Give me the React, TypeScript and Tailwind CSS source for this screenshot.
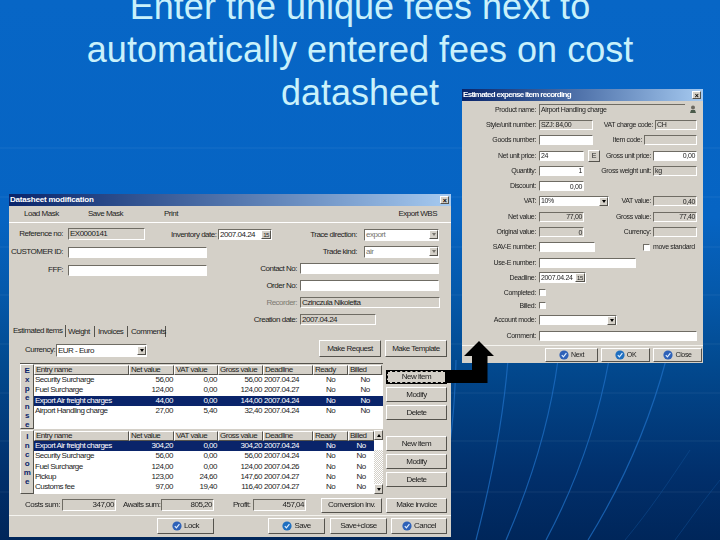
import type { ReactNode } from "react";

const sunken = "border border-t-[#6f6c64] border-l-[#6f6c64] border-b-white border-r-white";
const raised = "border border-t-white border-l-white border-b-[#55534d] border-r-[#55534d]";

function Label({ w, pr = 3, children, dim }: { w: number; pr?: number; children?: ReactNode; dim?: boolean }) {
  return (
    <span style={{ width: w, paddingRight: pr }} className={`shrink-0 text-right whitespace-nowrap ${dim ? "text-[#7d7a72]" : ""}`}>
      {children}
    </span>
  );
}

function Field({ w, h = 11, gray, right, children }: { w: number; h?: number; gray?: boolean; right?: boolean; children?: ReactNode }) {
  return (
    <div
      style={{ width: w, height: h }}
      className={`flex shrink-0 items-center overflow-hidden px-px leading-none ${sunken} ${gray ? "bg-[#d4d0c8]" : "bg-white"} ${right ? "justify-end" : ""}`}
    >
      {children}
    </div>
  );
}

function Select({ w, h = 12, gray, children }: { w: number; h?: number; gray?: boolean; children?: ReactNode }) {
  return (
    <div style={{ width: w, height: h }} className={`flex shrink-0 items-center justify-between bg-white pl-px ${sunken}`}>
      <span className={gray ? "text-[#77746d]" : ""}>{children}</span>
      <span className={`flex h-[9px] w-[9px] items-center justify-center bg-[#d4d0c8] ${raised}`}>
        <span className={`h-0 w-0 border-x-[2px] border-t-[3px] border-x-transparent ${gray ? "border-t-[#77746d]" : "border-t-black"}`} />
      </span>
    </div>
  );
}

function DateField({ w }: { w: number }) {
  return (
    <div style={{ width: w, height: 11 }} className={`flex shrink-0 items-center justify-between bg-white pl-px ${sunken}`}>
      <span>2007.04.24</span>
      <span className={`flex h-[9px] w-[10px] items-center justify-center bg-[#d4d0c8] text-[6px] leading-none ${raised}`}>15</span>
    </div>
  );
}

function Btn({ w, h, focus, icon, children }: { w: number; h: number; focus?: boolean; icon?: string; children: ReactNode }) {
  return (
    <div
      style={{ width: w, height: h }}
      className={`flex shrink-0 items-center justify-center gap-[2px] bg-[#d4d0c8] ${focus ? "border border-black outline-1 -outline-offset-2 outline-dashed outline-black" : raised}`}
    >
      {icon ? (
        <svg width="10" height="10" viewBox="0 0 10 10">
          <circle cx="5" cy="5" r="4.6" fill={icon} />
          <path d="M2.8 5.2 4.4 6.8 7.4 3.2" stroke="#dfeeff" strokeWidth="1.2" fill="none" />
        </svg>
      ) : null}
      <span>{children}</span>
    </div>
  );
}

function Title({ text, compact }: { text: string; compact?: boolean }) {
  return (
    <div className="flex h-[12px] shrink-0 items-center justify-between bg-gradient-to-r from-[#0a246a] to-[#a6caf0] pl-px pr-[2px] font-bold text-white">
      <span className={compact ? "text-[8px] tracking-[-0.7px]" : "tracking-[-0.2px]"}>{text}</span>
      <span className={`flex h-[8px] w-[9px] items-center justify-center bg-[#d4d0c8] text-[7px] leading-none text-black ${raised}`}>×</span>
    </div>
  );
}

const headers = ["Entry name", "Net value", "VAT value", "Gross value", "Deadline", "Ready", "Billed"];
const colWidths = [95, 45, 44, 45, 50, 35, 34];

type Row = { cells: string[]; sel?: boolean };

const expense: Row[] = [
  { cells: ["Security Surcharge", "56,00", "0,00", "56,00", "2007.04.24", "No", "No"] },
  { cells: ["Fuel Surcharge", "124,00", "0,00", "124,00", "2007.04.27", "No", "No"] },
  { cells: ["Export Air freight charges", "44,00", "0,00", "144,00", "2007.04.24", "No", "No"], sel: true },
  { cells: ["Airport Handling charge", "27,00", "5,40", "32,40", "2007.04.24", "No", "No"] },
];

const income: Row[] = [
  { cells: ["Export Air freight charges", "304,20", "0,00", "304,20", "2007.04.24", "No", "No"], sel: true },
  { cells: ["Security Surcharge", "56,00", "0,00", "56,00", "2007.04.24", "No", "No"] },
  { cells: ["Fuel Surcharge", "124,00", "0,00", "124,00", "2007.04.26", "No", "No"] },
  { cells: ["Pickup", "123,00", "24,60", "147,60", "2007.04.27", "No", "No"] },
  { cells: ["Customs fee", "97,00", "19,40", "116,40", "2007.04.27", "No", "No"] },
  { cells: ["Airport Handling", "27,00", "5,40", "32,40", "2007.04.24", "No", "No"] },
];

function Cell({ i, children, header, widths }: { i: number; children: ReactNode; header?: boolean; widths: number[] }) {
  const align = header ? "text-left pl-[1px]" : i === 0 ? "text-left pl-[1px]" : i >= 5 ? "text-center" : i === 4 ? "text-left pl-[1px]" : "text-right pr-[1px]";
  return (
    <div style={{ width: widths[i] }} className={`shrink-0 overflow-hidden whitespace-nowrap ${align} ${header ? raised : ""}`}>
      {children}
    </div>
  );
}

function Grid({ label, rows, height, scroll }: { label: string; rows: Row[]; height: number; scroll?: boolean }) {
  const widths = scroll ? [...colWidths.slice(0, 6), 26] : colWidths;
  return (
    <div style={{ height }} className="flex overflow-hidden bg-white">
      <div className={`flex w-[14px] shrink-0 flex-col items-center bg-[#d4d0c8] pt-[1px] text-[8px] font-bold leading-[9px] text-[#0a246a] ${raised}`}>
        {label.split("").map((c, i) => (
          <span key={i}>{c}</span>
        ))}
      </div>
      <div className="min-w-0 flex-1 overflow-hidden">
        <div className="flex h-[11px] items-center bg-[#d4d0c8] leading-none">
          {headers.map((h, i) => (
            <Cell key={h} i={i} header widths={widths}>
              {h}
            </Cell>
          ))}
        </div>
        {rows.map((r) => (
          <div key={r.cells[0]} className={`flex h-[10.3px] items-center leading-none ${r.sel ? "bg-[#0a246a] text-white" : ""}`}>
            {r.cells.map((c, i) => (
              <Cell key={i} i={i} widths={widths}>
                {c}
              </Cell>
            ))}
          </div>
        ))}
      </div>
      {scroll ? (
        <div className="flex w-[9px] shrink-0 flex-col bg-[repeating-conic-gradient(#d4d0c8_0_25%,#ffffff_0_50%)] bg-[length:2px_2px]">
          <span className={`flex h-[10px] items-center justify-center bg-[#d4d0c8] ${raised}`}>
            <span className="h-0 w-0 border-x-[2px] border-b-[3px] border-x-transparent border-b-black" />
          </span>
          <span className="h-[10px] bg-white" />
          <span className="flex-1" />
          <span className={`flex h-[10px] items-center justify-center bg-[#d4d0c8] ${raised}`}>
            <span className="h-0 w-0 border-x-[2px] border-t-[3px] border-x-transparent border-t-black" />
          </span>
        </div>
      ) : null}
    </div>
  );
}

function DatasheetWindow() {
  const rightRow = "flex h-[17px] items-center";
  return (
    <div className="absolute left-[9px] top-[194px] flex h-[343px] w-[442px] flex-col whitespace-nowrap bg-[#d4d0c8] tracking-[-0.5px] blur-[0.3px]">
      <Title text="Datasheet modification" />
      <div className="flex h-[17px] shrink-0 items-center border-b border-white pl-[15px] pr-[14px]">
        <span className="w-[64px]">Load Mask</span>
        <span className="w-[76px]">Save Mask</span>
        <span>Print</span>
        <span className="ml-auto">Export WBS</span>
      </div>
      {/* top form */}
      <div className="flex h-[103px] shrink-0 pt-[2px]">
        <div className="w-[209px] shrink-0">
          <div className="flex h-[18px] items-center">
            <Label w={59} pr={5}>
              Reference no:
            </Label>
            <Field w={77} h={12} gray>
              EX0000141
            </Field>
          </div>
          <div className="flex h-[18px] items-center">
            <Label w={59} pr={5}>
              CUSTOMER ID:
            </Label>
            <Field w={139} />
          </div>
          <div className="flex h-[18px] items-center">
            <Label w={59} pr={5}>
              FFF:
            </Label>
            <Field w={139} />
          </div>
        </div>
        <div className="mt-px flex h-[17px] w-[65px] shrink-0 items-center self-start">
          <span className="ml-[-47px] w-[47px] shrink-0 pr-[3px] text-right">Inventory date:</span>
          <DateField w={54} />
        </div>
        <div className="min-w-0 flex-1 pl-[17px] pt-px">
          <div className={rightRow}>
            <Label w={60}>Trace direction:</Label>
            <div className="w-[4px]" />
            <Select w={75} gray>
              export
            </Select>
          </div>
          <div className={rightRow}>
            <Label w={60}>Trade kind:</Label>
            <div className="w-[4px]" />
            <Select w={75} gray>
              air
            </Select>
          </div>
          <div className={`${rightRow} ml-[-61px]`}>
            <Label w={61}>Contact No:</Label>
            <Field w={139} />
          </div>
          <div className={`${rightRow} ml-[-61px]`}>
            <Label w={61}>Order No:</Label>
            <Field w={139} />
          </div>
          <div className={`${rightRow} ml-[-61px]`}>
            <Label w={61} dim>
              Recorder:
            </Label>
            <Field w={140} gray>
              Czinczula Nikoletta
            </Field>
          </div>
          <div className={`${rightRow} ml-[-61px]`}>
            <Label w={61}>Creation date:</Label>
            <Field w={76} gray>
              2007.04.24
            </Field>
          </div>
        </div>
      </div>
      {/* tabs */}
      <div className="flex h-[11px] shrink-0 items-end pl-[2px]">
        <span className="h-[12px] w-[55px] border-r border-[#55534d] pl-[2px] leading-[11px]">Estimated items</span>
        <span className="h-[11px] w-[29px] border-r border-[#55534d] pl-[2px] leading-[11px]">Weight</span>
        <span className="h-[11px] w-[33px] border-r border-[#55534d] pl-[3px] leading-[11px]">Invoices</span>
        <span className="h-[11px] w-[38px] border-r border-[#55534d] pl-[3px] leading-[11px]">Comments</span>
      </div>
      {/* tab panel */}
      <div className="flex min-h-0 flex-1 flex-col">
        <div className="flex h-[26px] shrink-0">
          <div className="flex flex-1 items-start pl-[16px] pt-[7px]">
            <span className="w-[31px] leading-[12px]">Currency:</span>
            <Select w={91} h={13}>
              EUR - Euro
            </Select>
          </div>
          <div className="flex gap-[4px] pr-[4px] pt-[3px]">
            <Btn w={62} h={17}>
              Make Request
            </Btn>
            <Btn w={62} h={17}>
              Make Template
            </Btn>
          </div>
        </div>
        <div className="flex h-[134px] shrink-0">
          <div className="ml-[11px] w-[363px] shrink-0 border-t border-[#55534d]">
            <Grid label="Expense" rows={expense} height={65} />
            <div className="mt-px">
              <Grid label="Income" rows={income} height={64} scroll />
            </div>
          </div>
          <div className="ml-[3px] flex w-[61px] shrink-0 flex-col gap-[3px] pt-[7px]">
            <Btn w={61} h={14} focus>
              New item
            </Btn>
            <Btn w={61} h={15}>
              Modify
            </Btn>
            <Btn w={61} h={15}>
              Delete
            </Btn>
            <div className="h-[10px]" />
            <Btn w={61} h={15}>
              New item
            </Btn>
            <Btn w={61} h={15}>
              Modify
            </Btn>
            <Btn w={61} h={15}>
              Delete
            </Btn>
          </div>
        </div>
        <div className="flex h-[19px] shrink-0 items-center border-b border-[#f4f3ef] pb-[2px] pl-[16px]">
          <span className="w-[37px]">Costs sum:</span>
          <Field w={54} h={12} gray right>
            347,00
          </Field>
          <span className="ml-[7px] w-[38px]">Awaits sum:</span>
          <Field w={53} h={12} gray right>
            805,20
          </Field>
          <span className="ml-[19px] w-[20px]">Profit:</span>
          <Field w={53} h={12} gray right>
            457,04
          </Field>
          <div className="ml-[15px] flex gap-[4px]">
            <Btn w={61} h={15}>
              Conversion inv.
            </Btn>
            <Btn w={61} h={15}>
              Make invoice
            </Btn>
          </div>
        </div>
        <div className="flex flex-1 items-center pb-px pl-[148px]">
          <Btn w={57} h={16} icon="#2f62b8">
            Lock
          </Btn>
          <div className="w-[54px]" />
          <Btn w={57} h={16} icon="#1f6fc0">
            Save
          </Btn>
          <div className="w-[5px]" />
          <Btn w={57} h={16}>
            Save+close
          </Btn>
          <div className="w-[4px]" />
          <Btn w={56} h={16} icon="#2f62b8">
            Cancel
          </Btn>
        </div>
      </div>
    </div>
  );
}

function FormRow({ h = 15.3, label, children }: { h?: number; label?: string; children: ReactNode }) {
  return (
    <div style={{ height: h }} className="flex items-center">
      <Label w={77}>{label}</Label>
      {children}
    </div>
  );
}

function Side({ w = 66, ml = 0, label, children }: { w?: number; ml?: number; label: string; children: ReactNode }) {
  return (
    <div style={{ marginLeft: ml }} className="flex items-center">
      <span style={{ width: w }} className="shrink-0 pr-[2px] text-right">
        {label}
      </span>
      {children}
    </div>
  );
}

function Check() {
  return <span className={`block h-[7px] w-[7px] shrink-0 bg-white ${sunken}`} />;
}

function ExpenseWindow() {
  return (
    <div className="absolute left-[462px] top-[89px] flex h-[274px] w-[241px] flex-col whitespace-nowrap bg-[#d4d0c8] text-[7px] tracking-[-0.35px] blur-[0.3px]">
      <Title text="Estimated expense item recording" compact />
      <div className="flex-1 pt-px">
        <FormRow label="Product name:">
          <div className="flex h-[11px] w-[146px] shrink-0 items-center border-t border-l border-[#6f6c64] pl-px">Airport Handling charge</div>
          <svg className="ml-[4px]" width="8" height="9" viewBox="0 0 8 9">
            <circle cx="4" cy="2.5" r="2" fill="#6b6860" />
            <path d="M1 8 2 5H6L7 8Z" fill="#4a5a4a" />
          </svg>
        </FormRow>
        <FormRow label="Style/unit number:">
          <Field w={54} h={10} gray>
            SZJ: 84,00
          </Field>
          <Side w={62} label="VAT charge code:">
            <Field w={42} h={10} gray>
              CH
            </Field>
          </Side>
        </FormRow>
        <FormRow label="Goods number:">
          <Field w={54} h={10} />
          <Side w={51} label="Item code:">
            <Field w={53} h={10} gray />
          </Side>
        </FormRow>
        <FormRow label="Net unit price:">
          <Field w={45} h={10}>
            24
          </Field>
          <div className={`ml-[4px] flex h-[12px] w-[12px] shrink-0 items-center justify-center bg-[#d4d0c8] leading-none ${raised}`}>E</div>
          <Side w={53} label="Gross unit price:">
            <Field w={44} h={10} right>
              0,00
            </Field>
          </Side>
        </FormRow>
        <FormRow label="Quantity:">
          <Field w={45} h={10} right>
            1
          </Field>
          <Side w={69} label="Gross weight unit:">
            <Field w={44} h={10} gray>
              kg
            </Field>
          </Side>
        </FormRow>
        <FormRow label="Discount:">
          <Field w={45} h={10} right>
            0,00
          </Field>
        </FormRow>
        <FormRow label="VAT:">
          <Select w={70} h={10}>
            10%
          </Select>
          <Side w={44} label="VAT value:">
            <Field w={44} h={10} gray right>
              0,40
            </Field>
          </Side>
        </FormRow>
        <FormRow label="Net value:">
          <Field w={45} h={10} gray right>
            77,00
          </Field>
          <Side w={69} label="Gross value:">
            <Field w={44} h={10} gray right>
              77,40
            </Field>
          </Side>
        </FormRow>
        <FormRow label="Original value:">
          <Field w={45} h={10} gray right>
            0
          </Field>
          <Side w={69} label="Currency:">
            <Field w={44} h={10} gray />
          </Side>
        </FormRow>
        <FormRow label="SAV-E number:">
          <Field w={56} h={10} />
          <div className="ml-[48px] flex items-center gap-[3px]">
            <Check />
            <span>move standard</span>
          </div>
        </FormRow>
        <FormRow label="Use-E number:">
          <Field w={97} h={10} />
        </FormRow>
        <FormRow label="Deadline:">
          <DateField w={47} />
        </FormRow>
        <FormRow h={14} label="Completed:">
          <Check />
        </FormRow>
        <FormRow h={12.5} label="Billed:">
          <Check />
        </FormRow>
        <FormRow h={16} label="Account mode:">
          <Select w={78} h={10} />
        </FormRow>
        <FormRow h={15.5} label="Comment:">
          <Field w={158} h={10} />
        </FormRow>
      </div>
      <div className="flex h-[18px] shrink-0 items-center justify-end gap-[3px] border-t border-[#f4f3ef] pr-px">
        <Btn w={53} h={14} icon="#2f62b8">
          Next
        </Btn>
        <Btn w={49} h={14} icon="#1f6fc0">
          OK
        </Btn>
        <Btn w={49} h={14} icon="#2f62b8">
          Close
        </Btn>
      </div>
    </div>
  );
}

function Backdrop() {
  return (
    <svg className="absolute inset-0" width="720" height="540" viewBox="0 0 720 540" fill="none">
      <g stroke="#ffffff" strokeOpacity="0.07">
        <path d="M0 148H720M0 197H720M0 247H720M0 295H720M0 344H720M0 393H720M0 441H720M0 492H720" />
      </g>
      <g stroke="#1f6fc4" strokeOpacity="0.75" strokeWidth="1.2">
        <path d="M456 360C455 400 452 430 449 450" />
        <path d="M508 360C504 410 494 470 476 540" />
        <path d="M558 360C550 420 532 480 506 540" />
        <path d="M609 360C598 420 578 480 546 540" />
        <path d="M666 360C650 420 625 480 588 540" />
      </g>
      <g stroke="#0f4f96" strokeOpacity="0.5">
        <path d="M720 480C700 505 690 520 675 540" />
        <path d="M690 450C670 480 650 510 625 540" />
      </g>
    </svg>
  );
}

export default function App() {
  return (
    <div className="relative h-[540px] w-[720px] overflow-hidden bg-[linear-gradient(180deg,#0766c6_0%,#0664c3_40%,#0558a9_55%,#024a90_67%,#012f6b_88%,#00265a_100%)] font-['Liberation_Sans',Arial,sans-serif] text-[8px] leading-[10px] text-[#1c1c1c]">
      <Backdrop />
      <h1 className="relative -mt-[15px] text-center text-[36px] font-normal leading-[43px] text-[#c9f1fb]">
        Enter the unique fees next to
        <br />
        automatically entered fees on cost
        <br />
        datasheet
      </h1>
      <DatasheetWindow />
      <ExpenseWindow />
      <svg className="absolute left-[440px] top-[335px]" width="60" height="55" viewBox="0 0 60 55">
        <path d="M5 35H32V21H24L39 6 54 21H47.5V48H5Z" fill="#000" />
      </svg>
    </div>
  );
}
